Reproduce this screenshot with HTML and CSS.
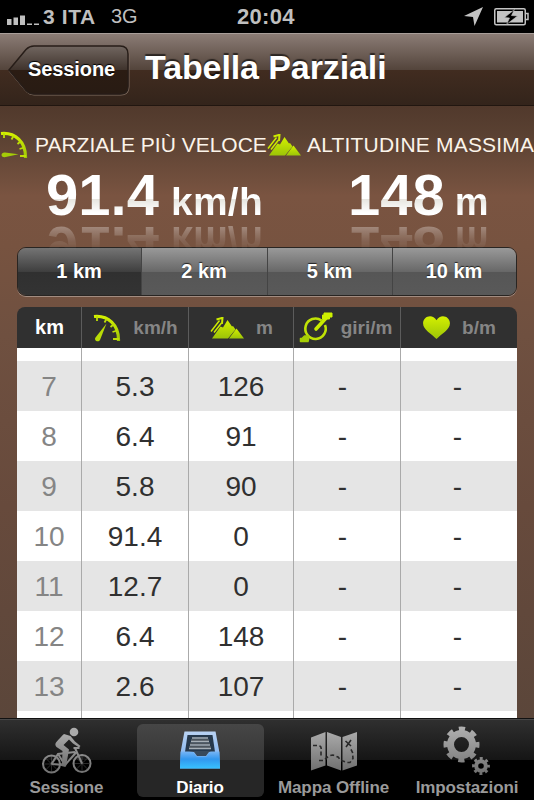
FILE: index.html
```html
<!DOCTYPE html>
<html lang="it">

<head>
  <meta charset="UTF-8">
  <meta name="viewport" content="width=device-width, initial-scale=1.0">
  <title>Tabella Parziali</title>
  <link rel="stylesheet" href="styles.css">
</head>

<body>

  <svg class="defs" width="0" height="0">
    <defs>
      <linearGradient id="lime" x1="0" y1="0" x2="0" y2="1">
        <stop offset="0" stop-color="#d4f000" />
        <stop offset="1" stop-color="#9cc408" />
      </linearGradient>
      <linearGradient id="grey" x1="0" y1="0" x2="0" y2="1">
        <stop offset="0" stop-color="#aaa" />
        <stop offset="1" stop-color="#707070" />
      </linearGradient>
      <linearGradient id="greyAll" gradientUnits="userSpaceOnUse" x1="0" y1="0" x2="0" y2="48">
        <stop offset="0" stop-color="#b0b0b0" />
        <stop offset="1" stop-color="#707070" />
      </linearGradient>
      <linearGradient id="frame" x1="0" y1="0" x2="0" y2="1">
        <stop offset="0" stop-color="#b9d2f2" />
        <stop offset="1" stop-color="#70a9ee" />
      </linearGradient>
      <linearGradient id="tray" x1="0" y1="0" x2="0" y2="1">
        <stop offset="0" stop-color="#78b5f5" />
        <stop offset=".45" stop-color="#3297ee" />
        <stop offset="1" stop-color="#38c2ff" />
      </linearGradient>
      <symbol id="dial" viewBox="0 0 28 28">
        <path d="M1 2.500C15 1 26 11 25.500 27" fill="none" stroke="url(#lime)" stroke-width="3.200" />
        <path d="M4 2v5M13.500 5l-2 3.500M20.500 10.500l-3 2.500M24 16.500l-4.500 1.500M26 25h-6" fill="none" stroke="#bddd06" stroke-width="1.800" />
      </symbol>
      <symbol id="mountains" viewBox="0 0 34 22">
        <path d="M2 21.500L10.500 9.500l2.500 1L17.500 3l4.500 6.500 1-.5 2.500 3.500L18 21.500z" fill="url(#lime)" />
        <path d="M19 21.500l7.500-10L34 21.500z" fill="url(#lime)" />
        <path d="M1 14.500L9.500 3.500M4 15.500l7.500-9.500" fill="none" stroke="#cceb00" stroke-width="1.500" />
        <path d="M6.500 2.500L12.500.8l-.5 6" fill="none" stroke="#cceb00" stroke-width="2" />
      </symbol>
    </defs>
  </svg>

  <div class="status">
    <svg class="signal" width="32" height="12" viewBox="0 0 32 12">
      <path d="M0 5h4.500v6H0zM6.500 3.500H11V11H6.500zM13 1.500h5V11h-5zM20 9.500h5V11h-5zM27 9.500h5V11h-5z" fill="#bfbfbf" />
    </svg>
    <span class="carrier">3 ITA</span>
    <span class="network">3G</span>
    <span class="clock">20:04</span>
    <svg class="location" width="19" height="19" viewBox="0 0 19 19">
      <path d="M19 0L10.500 19 9 10 0 9z" fill="#c4c4c4" />
    </svg>
    <svg class="battery" width="35" height="18" viewBox="0 0 35 18">
      <rect x=".75" y=".75" width="30.500" height="16" rx="1.500" fill="none" stroke="#c4c4c4" stroke-width="1.500" />
      <path d="M31 5.500h3v6h-3" fill="none" stroke="#c4c4c4" stroke-width="1.500" />
      <rect x="3" y="3" width="26" height="11.500" fill="#c4c4c4" />
      <path d="M20.500 1.500l-10 8 5 .5-3 6.500 11-8.500-6-.5z" fill="#000" stroke="#c4c4c4" stroke-width=".6" />
    </svg>
  </div>

  <div class="nav">
    <a class="back">
      <svg width="122" height="52" viewBox="0 0 122 52">
        <defs>
          <linearGradient id="backFill" x1="0" y1="0" x2="0" y2="1">
            <stop offset="0" stop-color="#716660" />
            <stop offset=".49" stop-color="#40342d" />
            <stop offset=".51" stop-color="#2b1c13" />
            <stop offset="1" stop-color="#281b13" />
          </linearGradient>
        </defs>
        <path d="M1 26L18 5.500Q21.500 2 26 2H113Q121 2 121 10V42Q121 50 113 50H26Q21.500 50 18 46.500z" fill="none" stroke="#7f6c60" stroke-width="1" />
        <path d="M1 25L18 4.500Q21.500 1 26 1H112Q120 1 120 9V41Q120 49 112 49H26Q21.500 49 18 45.500z" fill="url(#backFill)" stroke="#271d18" stroke-width="1.500" />
      </svg>
      <span>Sessione</span>
    </a>
    <h1>Tabella Parziali</h1>
  </div>

  <div class="main">
    <div class="stats">
      <div class="stat speed">
        <div class="label">
          <svg width="28" height="28" viewBox="0 0 28 28">
            <use href="#dial" width="28" height="28" />
            <path d="M18.500 23.200L5 21.500C1 21 0 26 4.500 26.300z" fill="#a5cc08" />
          </svg>
          <span>PARZIALE PIÙ VELOCE</span>
        </div>
        <p class="value"><b>91.4</b><i>km/h</i></p>
      </div>
      <div class="stat altitude">
        <div class="label">
          <svg width="34" height="22"><use href="#mountains" /></svg>
          <span>ALTITUDINE MASSIMA</span>
        </div>
        <p class="value"><b>148</b><i>m</i></p>
      </div>
    </div>

    <ul class="segments">
      <li class="active">1 km</li>
      <li>2 km</li>
      <li>5 km</li>
      <li>10 km</li>
    </ul>

    <div class="splits">
      <ul class="row head">
        <li>km</li>
        <li>
          <svg width="28" height="28" viewBox="0 0 28 28">
            <use href="#dial" width="28" height="28" />
            <path d="M13.500 9.500L7 26C5.500 29 .5 26.500 2.500 23.500z" fill="#b9dc06" />
          </svg>
          <span>km/h</span>
        </li>
        <li>
          <svg width="34" height="22"><use href="#mountains" /></svg>
          <span>m</span>
        </li>
        <li class="cadence">
          <svg width="34" height="31" viewBox="0 0 34 31">
            <path d="M22.500 8.500A10.200 10.200 0 1 0 26 13" fill="none" stroke="#c0e205" stroke-width="2.600" />
            <path d="M17 17L28 5" fill="none" stroke="#c9eb00" stroke-width="3.600" stroke-linecap="round" />
            <path d="M25 1h8v4h-2.500v2H23.500V3H25z" fill="#cdf000" stroke="#cdf000" stroke-linejoin="round" />
            <path d="M1.500 26.500H3l2.500-2.500h4v3.500L9 29.500H1.500z" fill="#a7cf06" stroke="#a7cf06" stroke-width="1.500" stroke-linejoin="round" />
          </svg>
          <span>giri/m</span>
        </li>
        <li>
          <svg width="27" height="24" viewBox="0 0 28 25">
            <path d="M14 24C9 18.500 0 14.500 0 7.500 0 0 10-3 14 4.500 18-3 28 0 28 7.500 28 14.500 19 18.500 14 24z" fill="url(#lime)" />
          </svg>
          <span>b/m</span>
        </li>
      </ul>
      <div class="rows">
        <ul class="row"><li></li><li></li><li></li><li></li><li></li></ul>
        <ul class="row"><li>7</li><li>5.3</li><li>126</li><li>-</li><li>-</li></ul>
        <ul class="row"><li>8</li><li>6.4</li><li>91</li><li>-</li><li>-</li></ul>
        <ul class="row"><li>9</li><li>5.8</li><li>90</li><li>-</li><li>-</li></ul>
        <ul class="row"><li>10</li><li>91.4</li><li>0</li><li>-</li><li>-</li></ul>
        <ul class="row"><li>11</li><li>12.7</li><li>0</li><li>-</li><li>-</li></ul>
        <ul class="row"><li>12</li><li>6.4</li><li>148</li><li>-</li><li>-</li></ul>
        <ul class="row"><li>13</li><li>2.6</li><li>107</li><li>-</li><li>-</li></ul>
        <ul class="row"><li></li><li></li><li></li><li></li><li></li></ul>
      </div>
    </div>
  </div>

  <ul class="tabs">
    <li>
      <svg width="50" height="48" viewBox="0 0 50 48">
        <g fill="none" stroke="url(#greyAll)" stroke-width="2">
          <circle cx="9.500" cy="37" r="8.500" />
          <circle cx="40" cy="36.500" r="8.500" />
          <path d="M9.500 37L16 27l17-2M16 27l7 11L34.500 25M9.500 37l13 1M33 21l7 15.500M31.500 21h6" />
          <path d="M9.500 29v16M2 37h15M40 29v15M32 36.500h15M4 31.500l11 11M4 42.500l11-11M34.500 31l11 11M34.500 42l11-11" stroke-width=".35" />
        </g>
        <circle cx="32" cy="5" r="4.300" fill="#ababab" />
        <path d="M28.500 9L22 7Q19.500 9 14 15.500 12.500 18 14.500 20L20.500 24 20 35.500 18 38.500Q21 40 24 39.500L27 22.500 21.500 18 27 12.500 31 16.500 37 20.500 38.500 19 33 14.500z" fill="url(#grey)" />
      </svg>
      <span>Sessione</span>
    </li>
    <li class="active">
      <svg width="42" height="40" viewBox="0 0 42 40">
        <path d="M5.500.5h31l3.500 18.500 1 18.500H1l1-18.500z" fill="url(#frame)" />
        <path d="M8.500 4h25L36 21H6z" fill="#26384b" />
        <path d="M12 8h18v2H12zM11 11.500h20v2H11zM10 15h22v2H10z" fill="#4c555d" />
        <path d="M13 7h16M12 10.500h18M11 14h20M10 17.500h22" stroke="#a6afb6" stroke-width="1.400" />
        <path d="M1.500 20.500h12.500l3.500 5h10l3-5H40.500l.5 17H1z" fill="url(#tray)" />
        <path d="M10 20h22l-2 1-3 4h-9l-3-4z" fill="#38495a" />
      </svg>
      <span>Diario</span>
    </li>
    <li>
      <svg width="48" height="40" viewBox="0 0 48 40">
        <path d="M1 6.500L15.500 1v33.500L1 39.500zM17 1l14 5v33.500l-14-5zM32.500 6L47 1v33.500l-14.500 5z" fill="url(#grey)" />
        <path d="M3 14.500h6q3 1 2 5v5M9 29.500h5q4-5 9-5.500l5 2 3 3.500 6 2h3l3-4-.5-6-2-4" fill="none" stroke="#292929" stroke-width="1.600" stroke-dasharray="4 2.500" />
        <path d="M35.500 10l5.500 5M41 9l-5 7" stroke="#292929" stroke-width="1.600" />
      </svg>
      <span>Mappa Offline</span>
    </li>
    <li>
      <svg width="48" height="48" viewBox="0 0 48 48">
        <g stroke="url(#greyAll)" fill="none">
          <circle cx="18.500" cy="17.500" r="11" stroke-width="7" />
          <circle cx="18.500" cy="17.500" r="15.500" stroke-width="5" stroke-dasharray="6.170 6" stroke-dashoffset="3.080" />
          <circle cx="38" cy="39" r="4.800" stroke-width="4" />
          <circle cx="38" cy="39" r="7.500" stroke-width="2.800" stroke-dasharray="2.950 2.940" stroke-dashoffset="1.470" />
        </g>
      </svg>
      <span>Impostazioni</span>
    </li>
  </ul>

</body>

</html>
```
FILE: styles.css
```css
* {
  margin: 0;
  padding: 0;
  list-style: none;
  box-sizing: border-box;
}

html,
body {
  width: 534px;
  height: 800px;
  overflow: hidden;
}

body {
  display: flex;
  flex-direction: column;
  background: #000;
  color: #fff;
  font-family: "Liberation Sans", Arial, sans-serif;
}

svg {
  display: block;
  flex: none;
}

.defs {
  position: absolute;
}

/* status bar */
.status {
  height: 33px;
  display: flex;
  align-items: center;
  padding: 0 5px 0 7px;
  color: #bfbfbf;
  font-size: 21px;
  font-weight: bold;
  white-space: nowrap;
}

.signal {
  margin-top: 7px;
}

.carrier {
  width: 56px;
  margin-left: 4px;
  letter-spacing: .6px;
}

.network {
  width: 28px;
  margin-left: 12px;
  font-size: 20px;
  font-weight: normal;
}

.clock {
  margin-left: 98px;
  font-size: 22px;
  letter-spacing: .3px;
}

.location {
  margin-left: auto;
}

.battery {
  margin-left: 11px;
}

/* navigation bar */
.nav {
  height: 73px;
  display: flex;
  padding: 11px 0 0 8px;
  border-top: 1px solid #a89e99;
  border-bottom: 1px solid #211610;
  background: linear-gradient(#8b7c75, #54453c 50%, #412c20 51%, #33241b);
}

.back {
  display: grid;
  height: 52px;
}

.back svg,
.back span {
  grid-area: 1 / 1;
}

.back span {
  padding: 12px 0 0 20px;
  font-size: 20px;
  line-height: 24px;
  font-weight: bold;
  letter-spacing: -.1px;
  text-shadow: 0 -1px 1px #000;
}

.nav h1 {
  margin-left: 15px;
  font-size: 34px;
  line-height: 44px;
  letter-spacing: -.1px;
  white-space: nowrap;
  text-shadow: 0 -2px 1px rgba(0, 0, 0, .6);
}

/* content */
.main {
  height: 612px;
  padding: 0 17px;
  background: linear-gradient(#51392c, #5a4132 30px, #7a5441 90px, #775340 140px, #6f5040 230px, #674a3c 400px, #5b463a);
}

.stats {
  height: 141px;
  margin: 0 -17px;
  padding-top: 22px;
  display: flex;
}

.stat {
  width: 267px;
}

.label {
  height: 33px;
  display: flex;
  align-items: center;
  font-size: 21px;
  color: #fbf4ea;
  white-space: nowrap;
}

.speed .label svg {
  margin-right: 7px;
}

.altitude .label svg {
  margin-right: 6px;
}

.altitude .label {
  letter-spacing: .2px;
}

.value {
  height: 68px;
  width: max-content;
  line-height: 68px;
  white-space: nowrap;
  background: linear-gradient(#fff 38px, #e6e5df 38px, #fff 52px);
  -webkit-background-clip: text;
  background-clip: text;
  color: transparent;
  -webkit-box-reflect: below -16px linear-gradient(transparent 46%, rgba(0, 0, 0, .4) 90%);
}

.value b {
  font-size: 58px;
}

.value i {
  margin-left: 12px;
  font-size: 39px;
  font-style: normal;
  font-weight: bold;
  letter-spacing: .3px;
}

.speed .value {
  margin-left: 46px;
}

.altitude .value {
  margin-left: 81px;
}

.altitude .value i {
  margin-left: 10px;
  font-size: 38px;
}

/* distance selector */
.segments {
  height: 49px;
  display: grid;
  grid-template-columns: 123px 126px 125px 1fr;
  border: 1px solid #292522;
  border-radius: 9px;
  box-shadow: 0 1px 0 #a28c80;
  overflow: hidden;
}

.segments li {
  padding-right: 1px;
  background: linear-gradient(#999, #686868 50%, #565656 51%, #595959);
  border-left: 1px solid #444;
  font-size: 20px;
  line-height: 46px;
  font-weight: bold;
  text-align: center;
  text-shadow: 0 -1px 1px #222;
}

.segments .active {
  border-left: 0;
  background: linear-gradient(#747474, #3f3f3f 50%, #303030 51%, #333);
}

/* splits table */
.splits {
  margin-top: 11px;
  border-radius: 8px 8px 0 0;
  overflow: hidden;
}

.row {
  height: 50px;
  display: grid;
  grid-template-columns: 64px 107px 105px 107px 117px;
}

.row li {
  display: flex;
  align-items: center;
  justify-content: center;
  border-left: 1px solid #aaa;
}

.row li:first-child {
  border-left: 0;
}

.rows .row {
  background: #fff;
  color: #303030;
  font-size: 28px;
}

.rows .row:nth-child(even) {
  background: #e5e5e5;
}

.rows .row li {
  padding-top: 2px;
}

.rows .row li:nth-child(4) {
  padding-right: 9px;
}

.rows .row li:nth-child(5) {
  padding-right: 3px;
}

.rows .row li:first-child {
  color: #858585;
}

.rows .row:first-child {
  height: 13px;
}

.rows .row:last-child {
  height: 7px;
}

.head {
  height: 41px;
  background: #303030;
  font-weight: bold;
  font-size: 20px;
}

.head li {
  padding-left: 1px;
  border-color: #5c5c5c;
}

.head span {
  margin-left: 12px;
  font-size: 19px;
  color: #858585;
}

.head .cadence {
  padding-right: 4px;
}

.head .cadence span {
  margin-left: 8px;
}

/* tab bar */
.tabs {
  height: 82px;
  display: flex;
  padding: 5px 0 3px 3px;
  border-top: 1px solid #111;
  box-shadow: inset 0 1px 0 #484848;
  background: linear-gradient(#303030, #151515 41px, #000 41px);
}

.tabs li {
  width: 127px;
  margin-right: 6.500px;
  height: 73px;
  display: flex;
  flex-direction: column;
  align-items: center;
  border-radius: 6px;
  flex: none;
}

.tabs svg {
  height: 50px;
  margin: 2px 0 0;
}

.tabs span {
  font-size: 17px;
  line-height: 24px;
  font-weight: bold;
  letter-spacing: -.1px;
  color: #9a9a9a;
  white-space: nowrap;
}

.tabs .active {
  background: linear-gradient(#464646, #373737 36px, #262626 36px);
}

.tabs .active span {
  color: #fff;
}
```
